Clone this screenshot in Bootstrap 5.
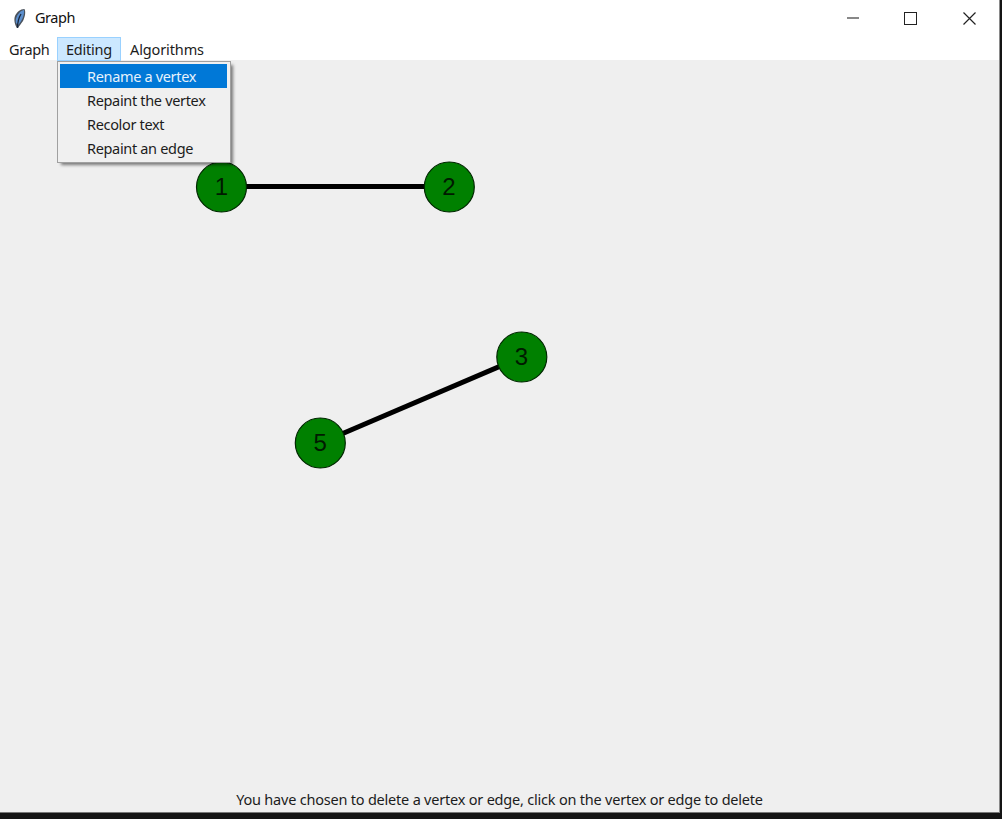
<!DOCTYPE html>
<html lang="en">
<head>
<meta charset="utf-8">
<meta name="viewport" content="width=device-width, initial-scale=1">
<title>Graph</title>
<link href="https://cdn.jsdelivr.net/npm/bootstrap@5.3.0/dist/css/bootstrap.min.css" rel="stylesheet">
<style>
  html, body { height: 100%; overflow: hidden; }
  body { background: #141414; font-family: "Noto Sans", "Open Sans", sans-serif; font-size: 14.5px; color: #1c1c1c; line-height: 24px; }
  .app-window { width: 1000px; height: 813px; background: #fff; border-right: 1px solid #8a8a8a; border-bottom: 1px solid #777; }
  .title-bar { height: 37px; padding-left: 12px; }
  .title-text { margin-left: 8px; padding-bottom: 3px; font-size: 14.5px; letter-spacing: -.45px; color: #111; }
  .window-button { width: 58.5px; height: 37px; }
  .menu-bar { height: 23px; }
  .menu-entry { height: 24px; border: 1px solid transparent; line-height: 23px; padding: 0 8px; letter-spacing: -.4px; color: inherit; white-space: nowrap; }
  .menu-entry.show { background: #cce8ff; border-color: #99d1ff; width: 64px; letter-spacing: -.25px; }
  .menu-entry.wide-entry { letter-spacing: -.12px; }
  .editing-menu { top: 24px; left: 0; width: 174px; padding: 2px 3px 2px 2px; border: 1px solid #a0a0a0; border-radius: 0; background: #f0f0f0; box-shadow: 3px 3px 3px -1px rgba(0,0,0,.5); font-size: 14.5px; color: inherit; margin: 0; }
  .editing-menu .dropdown-item { height: 24px; padding: 0 0 0 27px; line-height: 24px; letter-spacing: -.33px; color: inherit; }
  .editing-menu .dropdown-item.active { background: #0078d7; color: #e6f2fc; }
  .graph-area { background: #efefef; min-height: 0; }
  .vertex-label { font: 24px "Liberation Sans", Arial, sans-serif; text-anchor: middle; fill: #001a00; }
  .status-text { height: 24px; letter-spacing: -.21px; white-space: nowrap; }
</style>
</head>
<body>
<div class="app-window d-flex flex-column">
  <header class="title-bar d-flex align-items-center flex-shrink-0">
    <svg width="15" height="22" viewBox="0 0 15 22">
      <path d="M5 20C3 17 1.500 12 3 8C5 4 8 1 12.500 1C14 4 13 9 11 13C9 16 7 18 6 20Z" fill="#4a525c"/>
      <path d="M4 15C3 11 5 7 8 4C9 3 11 2 12 2C12.500 7 10 13 6 17Z" fill="#5b8fce"/>
      <path d="M5.500 20C5.500 15 6.500 10 9 6" fill="none" stroke="#18263c" stroke-width="1.3"/>
    </svg>
    <span class="title-text">Graph</span>
    <div class="d-flex ms-auto">
      <div class="window-button"><svg width="58" height="37"><path d="M23 18H35" stroke="#555" stroke-width="1.4"/></svg></div>
      <div class="window-button"><svg width="58" height="37"><rect x="22.500" y="12.500" width="12" height="12" fill="none" stroke="#222"/></svg></div>
      <div class="window-button"><svg width="58" height="37"><path d="M22.500 12.500L34.500 24.500M34.500 12.500L22.500 24.500" fill="none" stroke="#222" stroke-width="1.2"/></svg></div>
    </div>
  </header>
  <nav class="menu-bar d-flex flex-shrink-0">
    <div class="menu-entry" style="width:57px">Graph</div>
    <div class="dropdown">
      <div class="menu-entry show">Editing</div>
      <ul class="dropdown-menu editing-menu show">
        <li><a class="dropdown-item active">Rename a vertex</a></li>
        <li><a class="dropdown-item">Repaint the vertex</a></li>
        <li><a class="dropdown-item">Recolor text</a></li>
        <li><a class="dropdown-item">Repaint an edge</a></li>
      </ul>
    </div>
    <div class="menu-entry wide-entry">Algorithms</div>
  </nav>
  <main class="graph-area d-flex flex-column flex-grow-1">
    <svg class="d-block flex-shrink-0" width="999" height="727" viewBox="0 60 999 727">
      <g stroke="#000" stroke-width="5">
        <path d="M221.500 186.500H449.500"/>
        <path d="M320.500 443L521.500 357"/>
      </g>
      <g fill="#008000" stroke="#002800" stroke-width="1.2">
        <circle cx="221.500" cy="187" r="25"/>
        <circle cx="449.300" cy="187" r="25"/>
        <circle cx="521.800" cy="357" r="25"/>
        <circle cx="320.300" cy="443" r="25"/>
      </g>
      <g class="vertex-label">
        <text x="221.500" y="195">1</text>
        <text x="449" y="195">2</text>
        <text x="521.500" y="365">3</text>
        <text x="320.300" y="451">5</text>
      </g>
    </svg>
    <div class="status-text text-center">You have chosen to delete a vertex or edge, click on the vertex or edge to delete</div>
  </main>
</div>
<script src="https://cdn.jsdelivr.net/npm/bootstrap@5.3.0/dist/js/bootstrap.bundle.min.js"></script>
</body>
</html>
